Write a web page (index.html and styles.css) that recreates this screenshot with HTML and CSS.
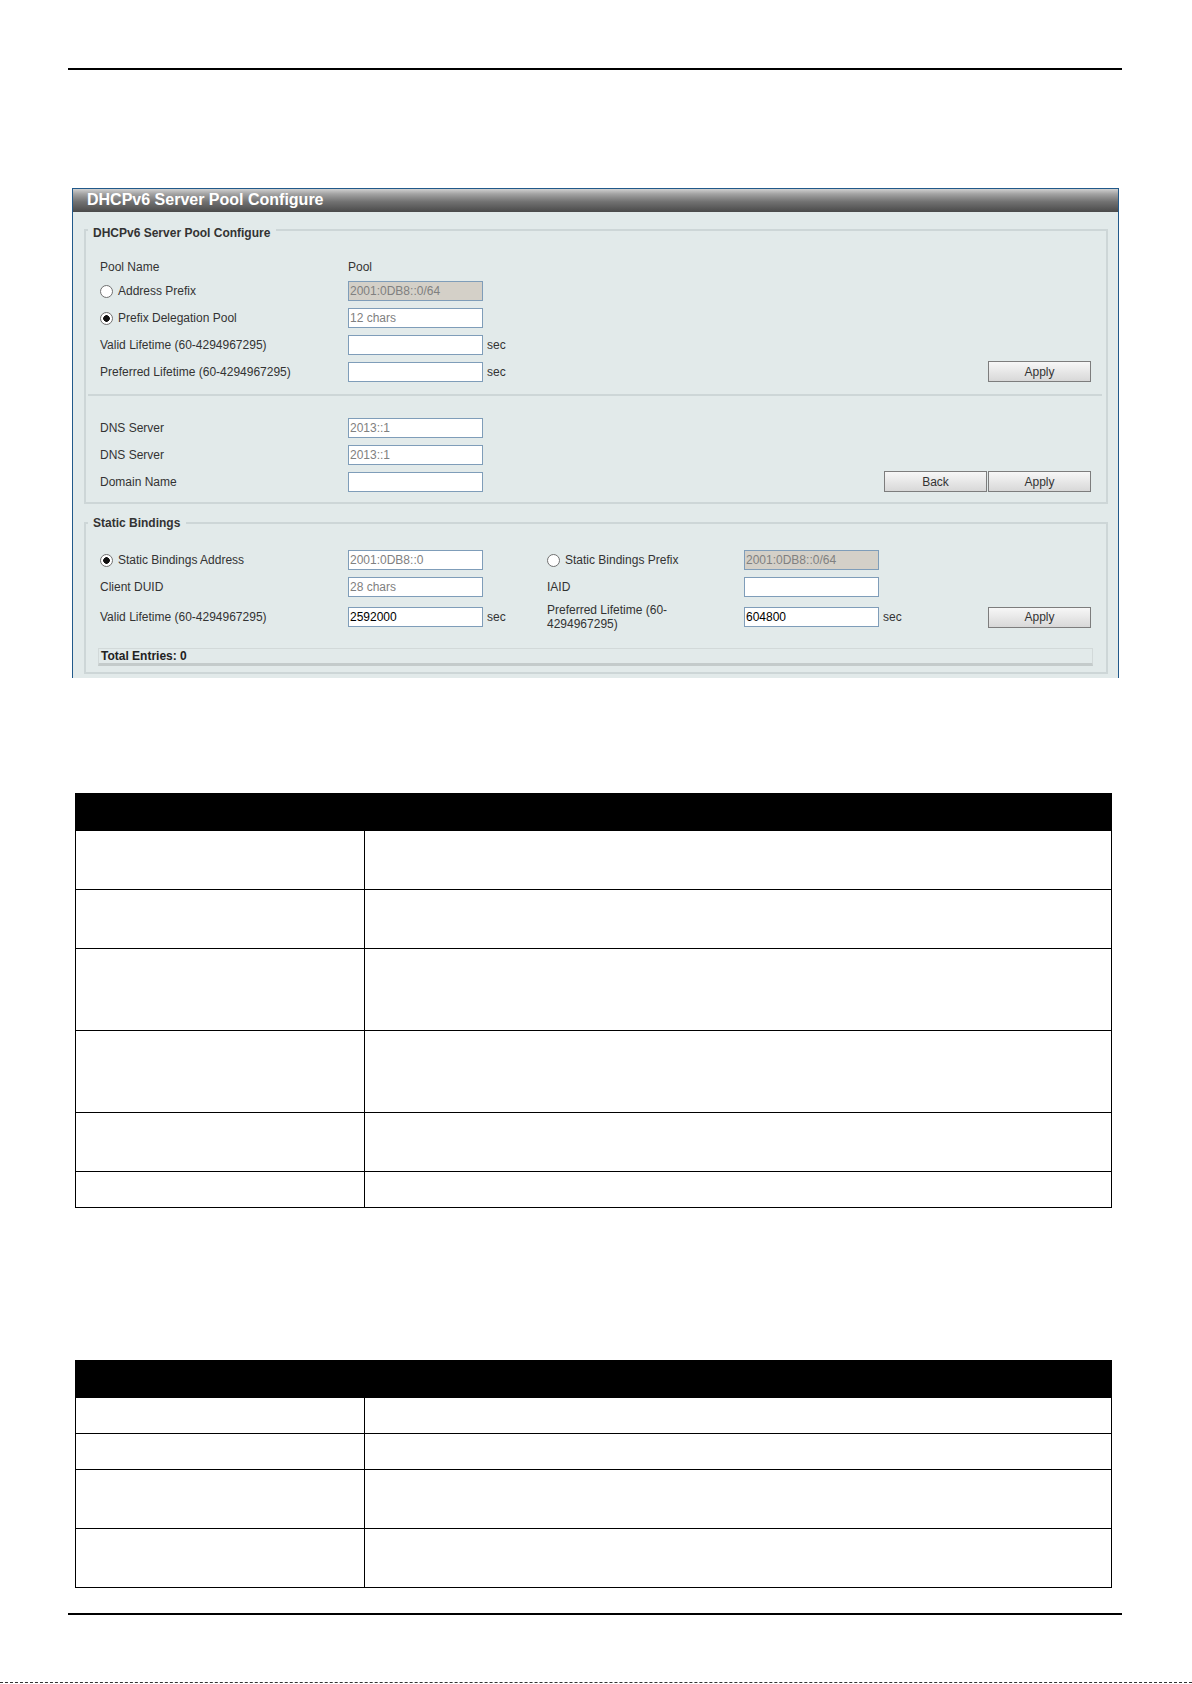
FILE: index.html
```html
<!DOCTYPE html>
<html lang="en">
<head>
    <meta charset="UTF-8">
    <meta name="viewport" content="width=device-width, initial-scale=1.0">
    <title>DHCPv6 Server Pool Configure</title>
    <link rel="stylesheet" href="styles.css">
</head>
<body>
    <div class="rule"></div>

    <div class="panel">
        <div class="panel-title">DHCPv6 Server Pool Configure</div>
        <div class="panel-body">

            <fieldset class="group">
                <legend class="legend-low">DHCPv6 Server Pool Configure</legend>
                <div class="fields fields-first">
                    <div class="row row-plain">
                        <span class="label">Pool Name</span>
                        <span>Pool</span>
                    </div>
                    <div class="row">
                        <label class="label choice"><input class="radio" type="radio" name="pool-type">Address Prefix</label>
                        <input class="field" type="text" value="2001:0DB8::0/64" disabled>
                    </div>
                    <div class="row">
                        <label class="label choice"><input class="radio" type="radio" name="pool-type" checked>Prefix Delegation Pool</label>
                        <input class="field" type="text" placeholder="12 chars">
                    </div>
                    <div class="row">
                        <span class="label">Valid Lifetime (60-4294967295)</span>
                        <input class="field" type="text">
                        <span class="unit">sec</span>
                    </div>
                    <div class="row">
                        <span class="label">Preferred Lifetime (60-4294967295)</span>
                        <input class="field" type="text">
                        <span class="unit">sec</span>
                        <button class="btn push" type="button">Apply</button>
                    </div>
                </div>
                <div class="divider"></div>
                <div class="fields fields-dns">
                    <div class="row">
                        <span class="label">DNS Server</span>
                        <input class="field" type="text" placeholder="2013::1">
                    </div>
                    <div class="row">
                        <span class="label">DNS Server</span>
                        <input class="field" type="text" placeholder="2013::1">
                    </div>
                    <div class="row">
                        <span class="label">Domain Name</span>
                        <input class="field" type="text">
                        <div class="btn-group push">
                            <button class="btn" type="button">Back</button>
                            <button class="btn" type="button">Apply</button>
                        </div>
                    </div>
                </div>
            </fieldset>

            <fieldset class="group">
                <legend>Static Bindings</legend>
                <div class="fields fields-bindings">
                    <div class="row">
                        <label class="label choice"><input class="radio" type="radio" name="binding" checked>Static Bindings Address</label>
                        <input class="field" type="text" placeholder="2001:0DB8::0">
                        <span class="unit unit-col"></span>
                        <label class="label-2 choice"><input class="radio" type="radio" name="binding">Static Bindings Prefix</label>
                        <input class="field" type="text" value="2001:0DB8::0/64" disabled>
                    </div>
                    <div class="row">
                        <span class="label">Client DUID</span>
                        <input class="field" type="text" placeholder="28 chars">
                        <span class="unit unit-col"></span>
                        <span class="label-2">IAID</span>
                        <input class="field" type="text">
                    </div>
                    <div class="row">
                        <span class="label">Valid Lifetime (60-4294967295)</span>
                        <input class="field" type="text" value="2592000">
                        <span class="unit unit-col">sec</span>
                        <span class="label-2">Preferred Lifetime (60-4294967295)</span>
                        <input class="field" type="text" value="604800">
                        <span class="unit">sec</span>
                        <button class="btn push" type="button">Apply</button>
                    </div>
                    <div class="total">Total Entries: 0</div>
                </div>
            </fieldset>

        </div>
    </div>

    <table class="param-table">
        <thead>
            <tr><th class="col-name"></th><th></th></tr>
        </thead>
        <tbody>
            <tr class="lines-2"><td></td><td></td></tr>
            <tr class="lines-2"><td></td><td></td></tr>
            <tr class="lines-3"><td></td><td></td></tr>
            <tr class="lines-3"><td></td><td></td></tr>
            <tr class="lines-2"><td></td><td></td></tr>
            <tr class="lines-1"><td></td><td></td></tr>
        </tbody>
    </table>

    <table class="param-table">
        <thead>
            <tr><th class="col-name"></th><th></th></tr>
        </thead>
        <tbody>
            <tr class="lines-1"><td></td><td></td></tr>
            <tr class="lines-1"><td></td><td></td></tr>
            <tr class="lines-2"><td></td><td></td></tr>
            <tr class="lines-2"><td></td><td></td></tr>
        </tbody>
    </table>

    <div class="rule rule-bottom"></div>
    <div class="page-cut"></div>
</body>
</html>
```

FILE: styles.css
```css
body {
    margin: 0;
    background-color: #fff;
    font-family: "Liberation Sans", Arial, sans-serif;
    font-size: 12px;
    color: #333;
}

/* page rules above and below the content */
.rule {
    width: 1054px;
    height: 2px;
    margin: 68px 0 0 68px;
    background-color: #000;
}
.rule-bottom {
    margin-top: 25px;
}
.page-cut {
    margin-top: 67px;
    border-top: 1px dashed #333;
}

/* configuration window */
.panel {
    width: 1047px;
    box-sizing: border-box;
    margin: 118px 0 0 72px;
    border: 1px solid #21598a;
    border-bottom: 0;
}
.panel-title {
    height: 23px;
    line-height: 22px;
    padding-left: 14px;
    color: #fff;
    font-size: 16px;
    font-weight: bold;
    background: linear-gradient(to bottom, #d0d0d0 0%, #a2a2a2 22%, #727272 55%, #4a4a4a 100%);
}
.panel-body {
    background-color: #e2eaea;
    padding: 8px 10px 4px 11px;
}

.group {
    margin: 0;
    padding: 0;
    min-width: 0;
    border: 2px solid #cdd6d7;
}
.group + .group {
    margin-top: 12px;
}
.group legend {
    margin-left: 2px;
    padding: 0 6px 0 5px;
    line-height: 14px;
    font-weight: bold;
    color: #333;
}
.group .legend-low {
    padding-top: 6px;
}

.fields {
    padding: 0 15px 0 14px;
}
.fields-first {
    padding-top: 17px;
}
.fields-dns {
    padding-top: 18px;
    padding-bottom: 7px;
}
.fields-bindings {
    padding-top: 16px;
    padding-bottom: 6px;
}
.divider {
    height: 2px;
    margin: 9px 4px 0 2px;
    background-color: #cdd6d7;
}

.row {
    display: flex;
    align-items: center;
    min-height: 21px;
    padding: 3px 0;
}
.row-plain {
    min-height: 20px;
    padding: 0;
}
.label {
    width: 248px;
    flex: none;
    line-height: 14px;
}
.label-2 {
    width: 185px;
    margin-right: 12px;
    flex: none;
    line-height: 14px;
}
.choice {
    display: flex;
    align-items: center;
}
.unit {
    padding-left: 4px;
}
.unit-col {
    width: 64px;
    box-sizing: border-box;
    flex: none;
}

.field {
    width: 135px;
    height: 20px;
    box-sizing: border-box;
    margin: 0;
    padding: 0 1px;
    border: 1px solid #7f9db9;
    background-color: #fff;
    color: #000;
    font-family: "Liberation Sans", Arial, sans-serif;
    font-size: 12px;
    flex: none;
}
.field::placeholder {
    color: #808080;
    opacity: 1;
}
.field:disabled {
    background-color: #d4d0c8;
    color: #808080;
}

.radio {
    appearance: none;
    width: 13px;
    height: 13px;
    margin: 2px 5px 0 0;
    border: 1px solid #707070;
    border-radius: 50%;
    background-color: #fff;
    flex: none;
}
.radio:checked {
    background: radial-gradient(circle, #111 0 3px, #fff 3.6px);
}

.btn {
    width: 103px;
    height: 21px;
    margin: 0;
    padding: 0;
    border: 1px solid #7d7d7d;
    background: linear-gradient(to bottom, #f7f7f7, #d8d8d8);
    color: #333;
    font-family: "Liberation Sans", Arial, sans-serif;
    font-size: 12px;
    flex: none;
}
.btn-group {
    display: flex;
    gap: 1px;
}
/* buttons sit at the right end of their row */
.row .push {
    margin-left: auto;
}

.total {
    margin: 14px -2px 0;
    padding: 0 2px;
    border: 1px solid #d2d9d9;
    border-bottom: 3px solid #c4cbcb;
    line-height: 14px;
    font-weight: bold;
    color: #222;
}

/* parameter tables */
.param-table {
    width: 1037px;
    margin: 115px 0 0 75px;
    border-collapse: collapse;
}
.param-table + .param-table {
    margin-top: 152px;
}
.param-table th,
.param-table td {
    padding: 0;
    border: 1px solid #000;
}
.param-table th {
    height: 36px;
    background-color: #000;
}
.col-name {
    width: 288px;
}
.lines-1 {
    height: 36px;
}
.lines-2 {
    height: 59px;
}
.lines-3 {
    height: 82px;
}
```
